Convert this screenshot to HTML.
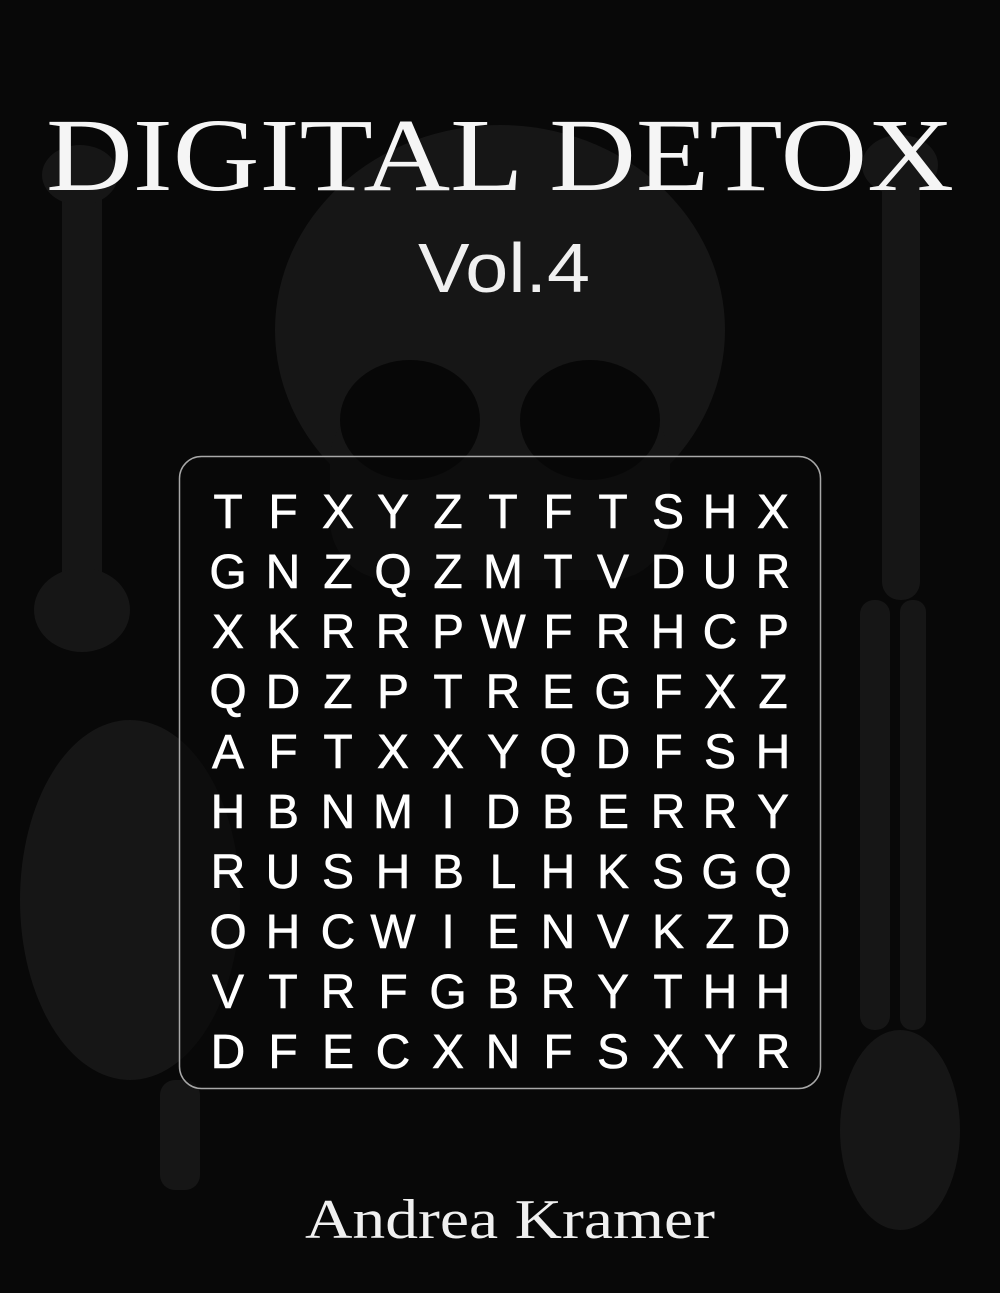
<!DOCTYPE html>
<html><head><meta charset="utf-8"><style>
html,body{margin:0;padding:0;background:#080808;}
svg{display:block}
</style></head><body>
<svg width="1000" height="1293" viewBox="0 0 1000 1293" xmlns="http://www.w3.org/2000/svg">
<rect width="1000" height="1293" fill="#080808"/>
<g fill="#161616">
<ellipse cx="500" cy="330" rx="225" ry="205"/>
<rect x="330" y="400" width="340" height="180" rx="60"/>
<rect x="62" y="170" width="40" height="420" rx="18"/>
<ellipse cx="80" cy="175" rx="38" ry="30"/>
<ellipse cx="82" cy="610" rx="48" ry="42"/>
<rect x="882" y="160" width="38" height="440" rx="18"/>
<ellipse cx="900" cy="165" rx="38" ry="30"/>
<rect x="860" y="600" width="30" height="430" rx="14"/>
<rect x="900" y="600" width="26" height="430" rx="12"/>
<ellipse cx="900" cy="1130" rx="60" ry="100"/>
<ellipse cx="130" cy="900" rx="110" ry="180"/>
<rect x="160" y="1080" width="40" height="110" rx="15"/>
</g>
<g fill="#070707">
<ellipse cx="410" cy="420" rx="70" ry="60"/>
<ellipse cx="590" cy="420" rx="70" ry="60"/>
</g>
<text x="500" y="190" text-anchor="middle" font-family="Liberation Serif, serif" font-size="104" fill="#f5f5f5" textLength="908" lengthAdjust="spacingAndGlyphs">DIGITAL DETOX</text>
<text x="504" y="292" text-anchor="middle" font-family="Liberation Sans, sans-serif" font-size="70" fill="#f0f0f0" textLength="172" lengthAdjust="spacingAndGlyphs">Vol.4</text>
<rect x="179.5" y="456.5" width="641" height="632" rx="22" fill="rgba(8,8,8,0.6)" stroke="#a8a8a8" stroke-width="1.5"/>
<g font-family="Liberation Sans, sans-serif" font-size="48" fill="#ffffff" text-anchor="middle" stroke="#ffffff" stroke-width="0.6">
<text y="528"><tspan x="228">T</tspan><tspan x="283">F</tspan><tspan x="338">X</tspan><tspan x="393">Y</tspan><tspan x="448">Z</tspan><tspan x="503">T</tspan><tspan x="558">F</tspan><tspan x="613">T</tspan><tspan x="668">S</tspan><tspan x="720">H</tspan><tspan x="773">X</tspan></text>
<text y="588"><tspan x="228">G</tspan><tspan x="283">N</tspan><tspan x="338">Z</tspan><tspan x="393">Q</tspan><tspan x="448">Z</tspan><tspan x="503">M</tspan><tspan x="558">T</tspan><tspan x="613">V</tspan><tspan x="668">D</tspan><tspan x="720">U</tspan><tspan x="773">R</tspan></text>
<text y="648"><tspan x="228">X</tspan><tspan x="283">K</tspan><tspan x="338">R</tspan><tspan x="393">R</tspan><tspan x="448">P</tspan><tspan x="503">W</tspan><tspan x="558">F</tspan><tspan x="613">R</tspan><tspan x="668">H</tspan><tspan x="720">C</tspan><tspan x="773">P</tspan></text>
<text y="708"><tspan x="228">Q</tspan><tspan x="283">D</tspan><tspan x="338">Z</tspan><tspan x="393">P</tspan><tspan x="448">T</tspan><tspan x="503">R</tspan><tspan x="558">E</tspan><tspan x="613">G</tspan><tspan x="668">F</tspan><tspan x="720">X</tspan><tspan x="773">Z</tspan></text>
<text y="768"><tspan x="228">A</tspan><tspan x="283">F</tspan><tspan x="338">T</tspan><tspan x="393">X</tspan><tspan x="448">X</tspan><tspan x="503">Y</tspan><tspan x="558">Q</tspan><tspan x="613">D</tspan><tspan x="668">F</tspan><tspan x="720">S</tspan><tspan x="773">H</tspan></text>
<text y="828"><tspan x="228">H</tspan><tspan x="283">B</tspan><tspan x="338">N</tspan><tspan x="393">M</tspan><tspan x="448">I</tspan><tspan x="503">D</tspan><tspan x="558">B</tspan><tspan x="613">E</tspan><tspan x="668">R</tspan><tspan x="720">R</tspan><tspan x="773">Y</tspan></text>
<text y="888"><tspan x="228">R</tspan><tspan x="283">U</tspan><tspan x="338">S</tspan><tspan x="393">H</tspan><tspan x="448">B</tspan><tspan x="503">L</tspan><tspan x="558">H</tspan><tspan x="613">K</tspan><tspan x="668">S</tspan><tspan x="720">G</tspan><tspan x="773">Q</tspan></text>
<text y="948"><tspan x="228">O</tspan><tspan x="283">H</tspan><tspan x="338">C</tspan><tspan x="393">W</tspan><tspan x="448">I</tspan><tspan x="503">E</tspan><tspan x="558">N</tspan><tspan x="613">V</tspan><tspan x="668">K</tspan><tspan x="720">Z</tspan><tspan x="773">D</tspan></text>
<text y="1008"><tspan x="228">V</tspan><tspan x="283">T</tspan><tspan x="338">R</tspan><tspan x="393">F</tspan><tspan x="448">G</tspan><tspan x="503">B</tspan><tspan x="558">R</tspan><tspan x="613">Y</tspan><tspan x="668">T</tspan><tspan x="720">H</tspan><tspan x="773">H</tspan></text>
<text y="1068"><tspan x="228">D</tspan><tspan x="283">F</tspan><tspan x="338">E</tspan><tspan x="393">C</tspan><tspan x="448">X</tspan><tspan x="503">N</tspan><tspan x="558">F</tspan><tspan x="613">S</tspan><tspan x="668">X</tspan><tspan x="720">Y</tspan><tspan x="773">R</tspan></text>
</g>
<text x="510" y="1238" text-anchor="middle" font-family="Liberation Serif, serif" font-size="56" fill="#f0f0f0" textLength="410" lengthAdjust="spacingAndGlyphs">Andrea Kramer</text>
</svg>
</body></html>
